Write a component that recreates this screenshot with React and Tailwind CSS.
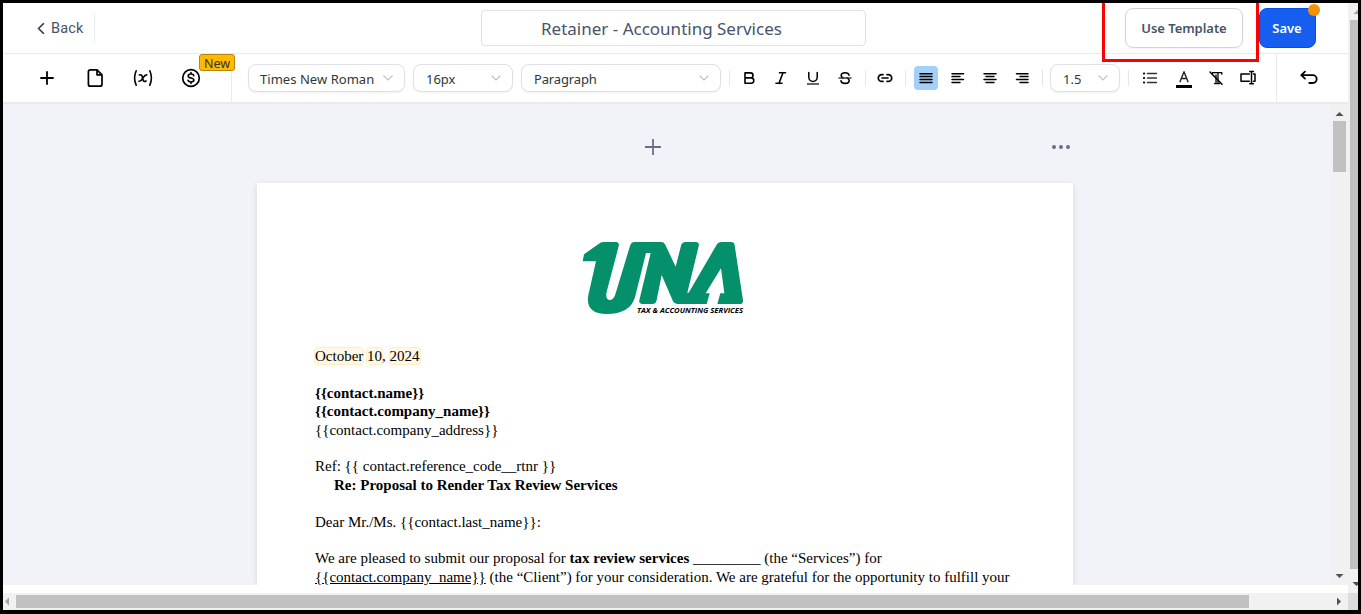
import React from "react";

const stroke = {
  fill: "none",
  stroke: "currentColor",
  strokeWidth: 1.6,
  strokeLinecap: "round",
  strokeLinejoin: "round",
};

function Tool({ children, className = "" }) {
  return (
    <button className={"flex h-6 w-6 shrink-0 items-center justify-center rounded text-black " + className}>
      <svg width="24" height="24" viewBox="0 0 24 24" {...stroke}>
        {children}
      </svg>
    </button>
  );
}

function Divider({ className = "" }) {
  return <div className={"h-4 w-px shrink-0 bg-[#e6e6ea] " + className} />;
}

function Select({ label, className = "", textClass = "" }) {
  return (
    <div
      className={
        "flex h-7 shrink-0 items-center justify-between rounded-lg border border-[#e0e0e6] bg-white pr-[10px] pl-[11px] shadow-[0_1px_2px_rgba(16,24,40,0.06)] " +
        className
      }
    >
      <span className={"pt-[3px] text-[13px] whitespace-nowrap text-[#333639] " + textClass}>{label}</span>
      <svg width="12" height="12" viewBox="0 0 12 12" fill="none" stroke="#c2c2c2" strokeWidth="1.1">
        <path d="M1.5 3.5 6 8l4.500-4.500" />
      </svg>
    </div>
  );
}

function Arrow({ dir, color = "#505050" }) {
  const d = {
    up: "M0.5 6 4.5 2 8.5 6z",
    down: "M0.5 2h8L4.5 6z",
    left: "M6 0.5v8L2 4.5z",
    right: "M2 0.5v8L6 4.5z",
  }[dir];
  return (
    <svg width="9" height="9" viewBox="0 0 9 9" className="shrink-0">
      <path d={d} fill={color} />
    </svg>
  );
}

function Header() {
  return (
    <header className="flex h-[51px] shrink-0 items-start border-b border-[#e8eaed] bg-white text-[#344054]">
      <div className="mt-[10px] flex h-[30px] w-[92px] items-center border-r border-[#e8eaed] pl-[33px]">
        <svg width="10" height="12" viewBox="0 0 10 12" {...stroke}>
          <path d="M7.500 1.700 2.500 6.500l5 4.800" />
        </svg>
        <span className="ml-[5px] pt-[2px] font-[Roboto] text-[14.5px] tracking-[0.150px] text-[#475467]">Back</span>
      </div>
      <div className="mt-[7px] ml-[386px] flex h-9 w-[385px] items-center rounded border border-[#e0e0e6] pt-px pl-[59px]">
        <span className="text-[17px] whitespace-nowrap text-[#475467]">Retainer - Accounting Services</span>
      </div>
      <button className="mt-[5px] ml-[259px] flex h-10 w-[118px] items-center justify-center rounded-lg border border-[#d0d5dd] pt-[2px] text-[13px] font-semibold tracking-[-0.050px] whitespace-nowrap text-[#475467] shadow-[0_1px_2px_rgba(16,24,40,0.05)]">
        Use Template
      </button>
      <button className="relative mt-[5px] ml-4 flex h-10 w-[57px] items-center justify-center rounded-lg border border-[#004eeb] bg-[#155eef] pt-[2px] pr-px text-[13px] font-semibold text-white">
        Save
        <span className="absolute -top-[5px] -right-[5px] h-3 w-3 rounded-full bg-[#f79009]" />
      </button>
    </header>
  );
}

function Toolbar() {
  return (
    <div className="flex h-[50px] shrink-0 items-center border-b-2 border-[#e8eaed] bg-white">
      <div className="flex h-full w-[229px] items-center gap-6 border-r border-[#e8eaed] pl-8">
        <Tool>
          <path d="M12 6v12M6 12h12" strokeWidth="1.8" />
        </Tool>
        <Tool>
          <path
            d="M14 3.800H7.400A2 2 0 0 0 5.400 5.800v12.400a2 2 0 0 0 2 2h9.600a2 2 0 0 0 2-2V8.800zM14 3.800v5h5"
            strokeWidth="1.700"
          />
        </Tool>
        <Tool>
          <path d="M5.200 4.800c-2 4.500-2 9.900 0 14.400M18.800 4.800c2 4.500 2 9.900 0 14.400M8.300 9c2-.800 2.700 0 3.300 3 .600 3.200 1.400 4.200 3.500 3M15.800 8.900c-1.500-.400-2.500.700-3.900 3.100-1.400 2.500-2.300 3.600-3.900 3.200" />
        </Tool>
        <div className="relative flex">
          <Tool>
            <circle cx="12" cy="12" r="8.300" strokeWidth="1.700" />
            <path d="M14.700 9.700C14.500 8.600 13.500 8 12 8c-1.700 0-2.800.700-2.800 1.900 0 2.800 5.700 1.400 5.700 4.200 0 1.200-1.200 1.900-2.900 1.900s-2.700-.600-3-1.700M12 6.500V8M12 16v1.500" />
          </Tool>
          <span className="absolute -top-[12px] left-5 flex h-[17px] w-9 items-center justify-center rounded-[3px] border border-[#b8860b] bg-[#ffb900] pt-[3px] text-[12.5px] text-[#333]">
            New
          </span>
        </div>
      </div>
      <div className="ml-4 flex gap-2">
        <Select label="Times New Roman" className="w-[157px]" textClass="tracking-[0.040px] text-[#4f5256]" />
        <Select label="16px" className="w-[100px]" textClass="pl-px" />
        <Select label="Paragraph" className="w-[200px]" textClass="tracking-[-0.150px] pl-px" />
      </div>
      <Divider className="ml-2" />
      <div className="ml-[7px] flex gap-2">
        <Tool>
          <path d="M8 6.900h5.500a2.500 2.500 0 0 1 0 5H8zM8 11.900h6.100a2.700 2.700 0 0 1 0 5.400H8z" />
        </Tool>
        <Tool>
          <path d="M10.500 6.700h6M7 17.300h6M14 6.700l-4 10.600" />
        </Tool>
        <Tool>
          <path d="M7.800 6.500v4.800a4.200 4.200 0 0 0 8.400 0V6.500" strokeWidth="1.500" />
          <path d="M6 18h12" stroke="#333" strokeWidth="1.500" strokeLinecap="butt" />
        </Tool>
        <Tool>
          <path d="M16 9.200c-.300-1.600-1.600-2.500-3.800-2.500-2.600 0-4 1-4 2.700 0 1.200.600 2 2 2.600M14 12c1.500.600 2.200 1.400 2.200 2.600 0 1.800-1.500 2.800-4 2.800S8.300 16.500 8 14.800" />
          <path d="M5.500 12h13" stroke="#333" strokeWidth="1.400" strokeLinecap="butt" />
        </Tool>
      </div>
      <Divider className="ml-2" />
      <Tool className="ml-[7px]">
        <path d="M10 8.600H8.700a3.400 3.400 0 0 0 0 6.800H10M14 8.600h1.300a3.400 3.400 0 0 1 0 6.800H14" strokeWidth="1.700" />
        <path d="M9 12h6" />
      </Tool>
      <Divider className="ml-2" />
      <div className="ml-2 flex gap-2">
        <Tool className="bg-[#a3cffb]">
          <path d="M6 7.700h12M6 10.600h12M6 13.500h12M6 16.400h12" strokeWidth="1.500" />
        </Tool>
        <Tool>
          <path d="M6 7.700h11.500M6 10.600h8M6 13.500h11.500M6 16.400h8" strokeWidth="1.500" />
        </Tool>
        <Tool>
          <path d="M6 7.700h12M8 10.600h8M6 13.500h12M8 16.400h8" strokeWidth="1.500" />
        </Tool>
        <Tool>
          <path d="M6.500 7.700H18M10 10.600h8M6.500 13.500H18M10 16.400h8" strokeWidth="1.500" />
        </Tool>
      </div>
      <Divider className="ml-2" />
      <Select label="1.5" className="ml-[7px] w-[70px]" textClass="pl-px" />
      <Divider className="ml-2" />
      <Tool className="ml-[9px]">
        <path d="M9.500 7.500h9M9.500 12h9M9.500 16.500h9" strokeWidth="1.400" stroke="#333" />
        <path d="M6 7.500h.100M6 12h.100M6 16.500h.100" strokeWidth="2.200" />
      </Tool>
      <Tool className="ml-[10px]">
        <path d="M8 15.700 12 5.700l4 10M9.500 12.500h5" strokeWidth="1.400" stroke="#222" />
        <path d="M4 20.500h16" strokeWidth="3" strokeLinecap="butt" />
      </Tool>
      <Tool className="ml-2">
        <path d="M8.500 8.200V6.700h9.300v1.500M12 9v8.500M14 7v10.500M10.500 17.600h5" strokeWidth="1.300" />
        <path d="M6 6l12 12.300" strokeWidth="1.500" />
      </Tool>
      <Tool className="ml-2">
        <path d="M13.300 8H5v7.200h8.300M17.500 8H19v7.200h-1.500M15.500 5.500v12.300M13.800 5.500h3.600M13.800 17.800h3.600" strokeWidth="1.500" />
      </Tool>
      <div className="ml-4 flex h-full items-center border-l border-[#e8eaed] pl-5">
        <Tool>
          <path d="M8 5.700 4.300 9.200 8 12.700M4.300 9.200h11.500a3.900 3.900 0 0 1 0 7.800h-3.500" strokeWidth="1.800" />
        </Tool>
      </div>
    </div>
  );
}

function Logo() {
  return (
    <svg width="165" height="75" viewBox="30 360 495 225" className="shrink-0">
      <path
        fill="#03906a"
        fillRule="evenodd"
        d="M38 424 42 403 90 369Q95 366 101 366H138Q149 367 146 379L110 515Q105 540 120 540 132 540 137 520L180 378Q183 366 194 366H274Q281 366 285 373L317 440 333 377Q336 366 346 366H378Q389 367 386 379L352 518H356L439 376Q444 366 455 366H483Q493 366 494 376L519 541Q520 552 509 552H442L451 520H463L453 445 407 520H419L410 552H322Q313 552 309 544L275 465 260 540Q258 552 247 552H218Q206 552 208 541L242 399H228L195 532Q180 582 110 582 45 581 55 525L78 424Z"
      />
      <text
        x="201"
        y="579"
        textLength="318"
        lengthAdjust="spacingAndGlyphs"
        className="fill-black font-['Open_Sans'] text-[20px] font-bold italic"
      >
        TAX &amp; ACCOUNTING SERVICES
      </text>
    </svg>
  );
}

function Mark({ children }) {
  return <span className="rounded-[3px] bg-[#fff8e6] shadow-[0_0_0_1px_#fdeec4]">{children}</span>;
}

function Line({ children, className = "" }) {
  return <p className={"h-[18.4px] whitespace-pre " + className}>{children}</p>;
}

function Letter() {
  return (
    <article className="flex h-[402px] w-[816px] flex-col overflow-hidden bg-white pl-[58px] font-['Liberation_Serif',serif] text-[15px] leading-[18.4px] text-black">
      <div className="mt-[57px] ml-[265px] flex">
        <Logo />
      </div>
      <div className="mt-[32px]">
        <Line>
          <Mark>October</Mark> <Mark>10</Mark>, <Mark>2024</Mark>
        </Line>
        <Line />
        <Line className="font-bold">{"{{contact.name}}"}</Line>
        <Line className="font-bold">{"{{contact.company_name}}"}</Line>
        <Line>{"{{contact.company_address}}"}</Line>
        <Line />
        <Line>{"Ref: {{ contact.reference_code__rtnr }}"}</Line>
        <Line className="pl-[19px] font-bold">Re: Proposal to Render Tax Review Services</Line>
        <Line />
        <Line>{"Dear Mr./Ms. {{contact.last_name}}:"}</Line>
        <Line />
        <Line>
          We are pleased to submit our proposal for <b>tax review services</b> _________ (the “Services”) for
        </Line>
        <Line>
          <u>{"{{contact.company_name}}"}</u> (the “Client”) for your consideration. We are grateful for the opportunity to fulfill your
        </Line>
      </div>
    </article>
  );
}

function Canvas() {
  return (
    <div className="flex h-[481px] shrink-0">
      <main className="flex w-[1328px] flex-col overflow-hidden bg-[#f2f3f8] pl-[254px]">
        <div className="flex h-[79px] w-[816px] shrink-0 items-center pt-[7px] text-[#667085]">
          <svg width="16" height="16" viewBox="0 0 16 16" className="ml-[388px]" fill="none" stroke="currentColor" strokeWidth="1.8">
            <path d="M8 0v16M0 8h16" />
          </svg>
          <svg width="18" height="4" viewBox="0 0 18 4" className="ml-[391px]" fill="currentColor">
            <circle cx="2" cy="2" r="2" />
            <circle cx="9" cy="2" r="2" />
            <circle cx="16" cy="2" r="2" />
          </svg>
        </div>
        <div className="w-[816px] shadow-[0_2px_6px_rgba(16,24,40,0.12)]">
          <Letter />
        </div>
      </main>
      <div className="flex w-[17px] flex-col items-center bg-[#f1f1f1]">
        <div className="mt-[3px] flex h-[14px] items-center">
          <Arrow dir="up" />
        </div>
        <div className="h-[51px] w-[13px] bg-[#c1c1c1]" />
        <div className="mt-auto mb-[4px] flex">
          <Arrow dir="down" />
        </div>
      </div>
    </div>
  );
}

export default function App() {
  return (
    <div className="relative h-[614px] w-[1361px] overflow-hidden border-[3px] border-b-4 border-black bg-white font-['Noto_Sans',sans-serif]">
      <div className="flex h-[590px]">
        <div className="flex w-[1345px] flex-col">
          <Header />
          <Toolbar />
          <Canvas />
        </div>
        <div className="flex w-[10px] flex-col overflow-hidden bg-[#f1f1f1] pl-[2px]">
          <div className="mt-[5px] flex h-3 w-[9px] pl-[3px]">
            <Arrow dir="up" color="#a3a3a3" />
          </div>
          <div className="h-[549px] bg-[#c1c1c1]" />
          <div className="mt-[11px] ml-[2px] flex w-[9px]">
            <Arrow dir="down" />
          </div>
        </div>
      </div>
      <div className="flex h-[17px]">
        <div className="flex w-[1345px] items-center bg-[#f1f1f1]">
          <div className="flex w-[13px]">
            <Arrow dir="left" color="#a3a3a3" />
          </div>
          <div className="h-[13px] w-[1233px] bg-[#c1c1c1]" />
          <div className="mr-[4px] ml-auto flex">
            <Arrow dir="right" />
          </div>
        </div>
        <div className="w-[10px] bg-[#dcdcdc]" />
      </div>
      <div className="pointer-events-none absolute top-0 left-[1099px] h-[59px] w-[157px] border-[3px] border-t-0 border-[#ff0000]" />
    </div>
  );
}
